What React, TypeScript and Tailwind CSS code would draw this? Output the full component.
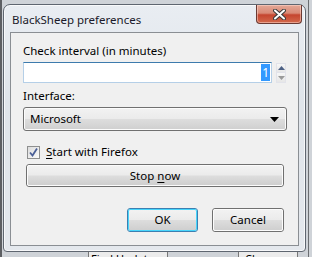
import React from "react";

const FONT = "font-['Segoe_UI','Noto_Sans',sans-serif]";

function Btn({ children, focused, className }: { children: React.ReactNode; focused?: boolean; className?: string }) {
  return (
    <div
      className={`flex items-center justify-center rounded-[3px] border ${
        focused ? "border-[#3c7fb1]" : "border-[#707070]"
      } ${className ?? ""}`}
    >
      <div
        className={`flex h-full w-full items-center justify-center rounded-[2px] border ${
          focused ? "border-[#48d5fb]" : "border-[#fcfcfc]"
        } bg-[linear-gradient(180deg,#f2f2f2_0%,#ebebeb_48%,#dddddd_52%,#cfcfcf_100%)] text-[11.5px] text-black`}
      >
        {children}
      </div>
    </div>
  );
}

export default function App() {
  return (
    <div className={`relative h-[257px] w-[312px] overflow-hidden bg-[#cfd3d8] ${FONT}`}>
      {/* desktop behind: other window's edges */}
      <div className="absolute left-0 top-0 h-full w-[2px] bg-[#5d5f63]" />
      <div className="absolute right-[3px] top-0 h-full w-[1px] bg-[#6b6e72]" />
      <div className="absolute bottom-0 left-[88px] h-[6px] w-[80px] overflow-hidden border-x border-t border-[#777] bg-[#ececec] text-[11px] leading-[14px] text-black">
        <span className="ml-[2px]">Find Updates</span>
      </div>
      <div className="absolute bottom-0 left-[238px] h-[6px] w-[60px] overflow-hidden border-x border-t border-[#777] bg-[#ececec] text-[11px] leading-[14px] text-black">
        <span className="ml-[6px]">Close</span>
      </div>

      {/* dialog window */}
      <div className="absolute left-[3px] top-[4px] flex h-[248px] w-[303px] flex-col rounded-t-[7px] rounded-b-[4px] border border-[#5f6670] bg-[linear-gradient(180deg,#e9edf2_0%,#dfe4ea_40%,#e4e8ed_100%)] shadow-[inset_0_0_0_1px_rgba(255,255,255,0.7)]">
        {/* title bar */}
        <div className="flex h-[27px] shrink-0 items-start">
          <div className="pl-[8px] pt-[7px] text-[11.5px] leading-[16px] text-[#1a1a2a]">BlackSheep preferences</div>
          <div className="ml-auto mr-[3px] flex h-[19px] w-[46px] items-center justify-center rounded-b-[4px] border border-t-0 border-[#6a3a33] bg-[linear-gradient(180deg,#e4a897_0%,#d98a76_45%,#c5452f_55%,#d36a4c_100%)] shadow-[inset_0_0_0_1px_rgba(255,220,210,0.5)]">
            <svg width="13" height="11" viewBox="0 0 13 11">
              <path
                d="M2 1.5 L6.5 5.5 L11 1.5 M2 9.5 L6.5 5.5 L11 9.5"
                stroke="#3b3b3b"
                strokeWidth="4"
                strokeLinecap="round"
                fill="none"
              />
              <path
                d="M2 1.5 L6.5 5.5 L11 1.5 M2 9.5 L6.5 5.5 L11 9.5"
                stroke="#ffffff"
                strokeWidth="2"
                strokeLinecap="round"
                fill="none"
              />
            </svg>
          </div>
        </div>

        {/* client area */}
        <div className="mx-[6px] mb-[5px] flex flex-1 flex-col border border-[#8a8e93] bg-[#f0f0f0] px-[12px] text-[11.5px] text-black">
          <div className="mt-[10px] leading-[16px]">Check interval (in minutes)</div>
          <div className="mt-[3px] flex items-start">
            <div className="flex h-[21px] w-[251px] items-center justify-end border border-[#b5cfe7] border-t-[#3d7bad] bg-white pr-[1px]">
              <span className="bg-[#3399ff] px-[1px] text-[12px] leading-[17px] text-white">1</span>
            </div>
            <div className="ml-[4px] mt-[1px] flex w-[10px] flex-col border border-[#e2e3ea] bg-white">
              <div className="flex h-[9px] items-center justify-center border-b border-[#e2e3ea] bg-[linear-gradient(180deg,#f7f7f7,#e6e6e6)]">
                <svg width="7" height="4" viewBox="0 0 7 4">
                  <path d="M0 4 L3.5 0 L7 4 Z" fill="#4d6185" />
                </svg>
              </div>
              <div className="flex h-[9px] items-center justify-center bg-[linear-gradient(180deg,#f7f7f7,#e6e6e6)]">
                <svg width="7" height="4" viewBox="0 0 7 4">
                  <path d="M0 0 L3.5 4 L7 0 Z" fill="#9a9a9a" />
                </svg>
              </div>
            </div>
          </div>

          <div className="mt-[5px] leading-[16px]">Interface:</div>
          <div className="mt-[3px] flex h-[24px] w-[264px] items-center rounded-[3px] border border-[#707070] bg-[linear-gradient(180deg,#f2f2f2_0%,#ebebeb_48%,#dddddd_52%,#cfcfcf_100%)] pl-[6px] pr-[7px] shadow-[inset_0_0_0_1px_#fcfcfc]">
            <span>Microsoft</span>
            <svg className="ml-auto" width="9" height="5" viewBox="0 0 9 5">
              <path d="M0 0 L9 0 L4.5 5 Z" fill="#000" />
            </svg>
          </div>

          <div className="ml-[4px] mt-[13px] flex items-center">
            <div className="flex h-[13px] w-[13px] items-center justify-center border border-[#8e8f8f] bg-[linear-gradient(135deg,#dcdcdc,#fbfbfb)]">
              <svg width="9" height="9" viewBox="0 0 9 9">
                <path d="M1 4.5 L3.5 7.5 L8 0.5" stroke="#4a5f97" strokeWidth="1.8" fill="none" />
              </svg>
            </div>
            <span className="ml-[6px] leading-[16px]">
              <span className="underline underline-offset-2">S</span>tart with Firefox
            </span>
          </div>

          <Btn className="ml-[3px] mt-[4px] h-[23px] w-[258px]">
            <span>
              Stop <span className="underline underline-offset-2">n</span>ow
            </span>
          </Btn>

          <div className="ml-[104px] mt-[21px] flex gap-[14px]">
            <Btn focused className="h-[24px] w-[71px]">
              OK
            </Btn>
            <Btn className="h-[24px] w-[72px]">Cancel</Btn>
          </div>
        </div>
      </div>
    </div>
  );
}
